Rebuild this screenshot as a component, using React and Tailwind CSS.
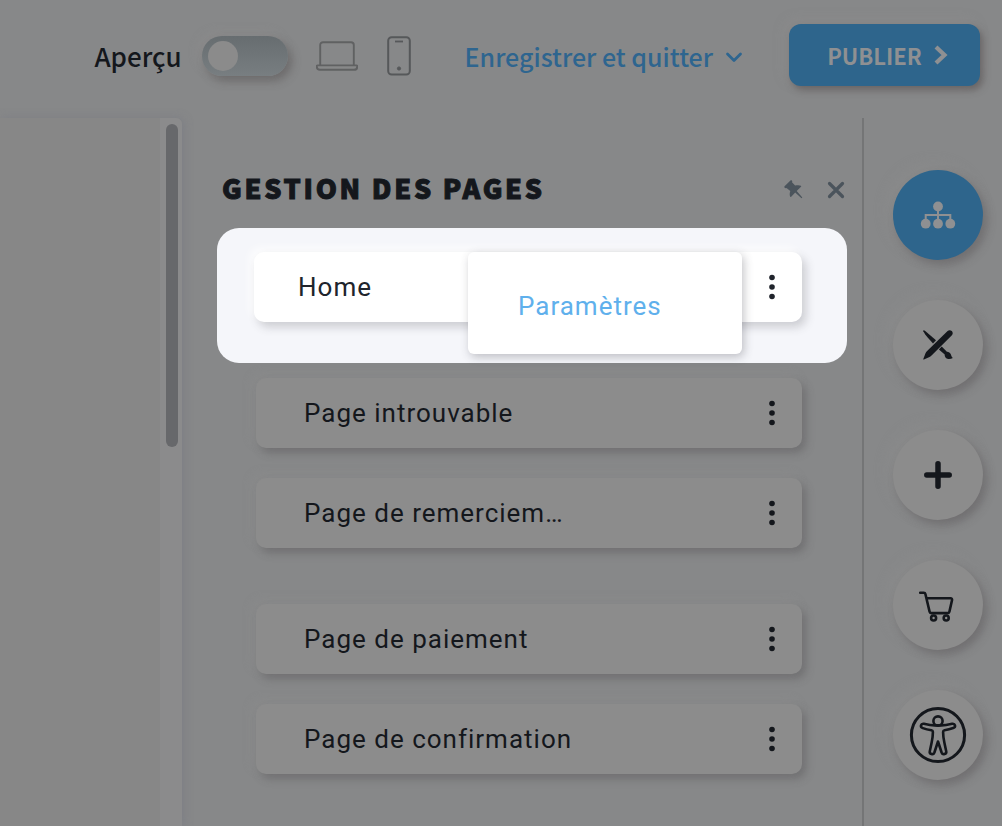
import React from "react";

const pages = [
  { name: "Page introuvable", gap: "mt-[15px]" },
  { name: "Page de remerciem…", gap: "mt-[30px]" },
  { name: "Page de paiement", gap: "mt-14" },
  { name: "Page de confirmation", gap: "mt-[30px]" },
];

function MoreButton({ label, tone }) {
  return (
    <button type="button" aria-label={label} className={"flex h-10 w-10 items-center justify-center " + tone}>
      <svg width="8" height="26" viewBox="0 0 8 26" fill="currentColor" aria-hidden="true">
        <circle cx="4" cy="3.5" r="2.8" />
        <circle cx="4" cy="13" r="2.8" />
        <circle cx="4" cy="22.5" r="2.8" />
      </svg>
    </button>
  );
}

function LaptopIcon() {
  return (
    <svg width="42" height="30" viewBox="0 0 42 30" fill="none" stroke="currentColor" strokeWidth="1.9" aria-hidden="true">
      <path d="M4.2 24V4c0-1.700 1.200-2.800 2.800-2.800h28c1.700 0 2.800 1.200 2.800 2.800v20" />
      <path d="M1.800 24.400h38.600c.5 0 .8.3.8.8v.600c0 1.900-1.300 3-3.200 3H4c-2 0-3.200-1.200-3.200-3v-.600c0-.5.4-.8 1-.8z" />
    </svg>
  );
}

function PhoneIcon() {
  return (
    <svg width="24" height="40" viewBox="0 0 24 40" fill="none" stroke="currentColor" strokeWidth="2" aria-hidden="true">
      <rect x="1.200" y="1.200" width="21.600" height="37.400" rx="3.500" />
      <path d="M8 5.500h8" strokeWidth="1.800" />
      <circle cx="12" cy="32.500" r="1.600" fill="currentColor" strokeWidth="1" />
    </svg>
  );
}

function SitemapIcon() {
  return (
    <svg width="36" height="30" viewBox="0 0 36 30" aria-hidden="true">
      <path d="M18 6v18M5.700 24V15h24.600v9" fill="none" stroke="currentColor" strokeWidth="2" />
      <g fill="currentColor">
        <circle cx="18" cy="6.500" r="4.900" />
        <circle cx="5.700" cy="23.700" r="4.900" />
        <circle cx="18" cy="23.700" r="4.900" />
        <circle cx="30.300" cy="23.700" r="4.900" />
      </g>
    </svg>
  );
}

function DesignIcon() {
  return (
    <svg width="30" height="30" viewBox="0 0 30 30" fill="currentColor" aria-hidden="true">
      <path d="M.3.400C.8.200 1.500.400 2.200.900l10.800 9.300-3 3.200C6.600 9.900 2.400 5.400.3 1.300z" />
      <path d="M18.700 16.500l5.200 5.300c1.600-.1 3.200.9 3.900 2.400.5 1.300.8 2.600 2.100 3.900-2.600 1.400-5.500 1.200-6.900-.1-1-.9-1.400-2.100-1.300-3.400l-5.800-5.100z" />
      <path d="M24.600 1c1.200-1.100 3-1 4.200.1s1.200 2.900.1 4.100L8.800 25.300c-.7.7-1.400 1.200-2.300 1.600L.9 29.500c-.4.200-.8-.1-.6-.6l2.200-5.600c.4-.9.900-1.600 1.600-2.300z" />
    </svg>
  );
}

function PlusIcon() {
  return (
    <svg width="28" height="28" viewBox="0 0 28 28" fill="none" stroke="currentColor" strokeWidth="5.500" strokeLinecap="round" aria-hidden="true">
      <path d="M14 2.800v22.400M2.800 14h22.400" />
    </svg>
  );
}

function CartIcon() {
  return (
    <svg width="40" height="36" viewBox="0 0 40 36" fill="none" stroke="currentColor" strokeWidth="2.600" strokeLinecap="round" strokeLinejoin="round" aria-hidden="true">
      <path d="M2.200 5.800h3.600c.9 0 1.400.4 1.600 1.200l4.200 17.700c.2.900.8 1.400 1.700 1.400h16.400c.9 0 1.500-.5 1.700-1.400l2.600-11.500c.3-1.200-.3-1.900-1.500-1.900H8.600" />
      <circle cx="15.600" cy="31" r="2.500" />
      <circle cx="28.200" cy="31" r="2.500" />
    </svg>
  );
}

function AccessibilityIcon() {
  return (
    <svg width="58" height="58" viewBox="0 0 58 58" fill="none" stroke="currentColor" strokeLinejoin="round" aria-hidden="true">
      <circle cx="29" cy="29" r="26.600" strokeWidth="3" />
      <circle cx="29" cy="15" r="4.600" strokeWidth="2.600" />
      <path strokeWidth="2.600" d="M25.700 19.400h6.600c3.700-.1 7.600-.9 10.800-1.600 3.200-.5 4.100 3.300 1.100 4.300-2.800 1-6 1.700-8.700 2.100-1.200.2-1.400.7-1.400 1.800 0 4 .5 7.300 1.300 10.800l1.800 8.400c.7 3-3.500 4.200-4.600 1.300L29 35.500l-3.600 11c-1.100 2.900-5.300 1.700-4.600-1.300l1.800-8.400c.8-3.500 1.300-6.800 1.300-10.800 0-1.100-.2-1.600-1.400-1.800-2.700-.4-5.900-1.100-8.700-2.100-3-1-2.100-4.800 1.100-4.300 3.200.7 7.100 1.500 10.800 1.600z" />
    </svg>
  );
}

const tools = [
  { label: "Pages", icon: SitemapIcon, active: true },
  { label: "Design", icon: DesignIcon },
  { label: "Ajouter", icon: PlusIcon },
  { label: "Boutique", icon: CartIcon },
  { label: "Accessibilité", icon: AccessibilityIcon },
];

export default function App() {
  return (
    <div className="flex min-h-screen flex-col bg-[#878889] font-['Roboto',sans-serif] text-[#14171c]">
      <header className="flex h-[118px] items-start justify-end pr-[22px] pt-6 font-['Noto_Sans_CJK_JP',sans-serif] whitespace-nowrap">
        <div className="flex h-16 items-center">
          <label htmlFor="preview" className="text-[26px] leading-8 font-medium">Aperçu</label>
          <span className="relative ml-5 block h-10 w-[86px]">
            <input
              id="preview"
              type="checkbox"
              role="switch"
              className="block h-10 w-[86px] appearance-none rounded-full bg-linear-to-b from-[#676d70] to-[#787e81] shadow-[4px_5px_10px_rgba(70,65,65,0.4),-4px_-4px_10px_rgba(145,143,143,0.4)]"
            />
            <span className="pointer-events-none absolute left-1.5 top-[5px] size-[30px] rounded-full bg-[#8b8b8b]" />
          </span>
          <button type="button" aria-label="Ordinateur" className="ml-7 text-[#606162]"><LaptopIcon /></button>
          <button type="button" aria-label="Mobile" className="ml-[29px] text-[#56585a]"><PhoneIcon /></button>
          <button type="button" className="ml-[54px] flex items-center gap-3 text-[25px] leading-8 font-medium text-[#2e658f]">
            Enregistrer et quitter
            <svg width="18" height="14" viewBox="0 0 18 14" fill="none" stroke="currentColor" strokeWidth="2.800" strokeLinecap="round" strokeLinejoin="round" aria-hidden="true">
              <path d="M2.500 5L9 11.500 15.500 5" />
            </svg>
          </button>
        </div>
        <button type="button" className="ml-[46px] flex h-[62px] w-[191px] items-center justify-center gap-3 rounded-xl bg-[#2e658c] pl-1.5 text-[22px] leading-8 font-bold text-[#8f9092] shadow-[3px_4px_7px_rgba(75,68,68,0.5),-4px_-4px_12px_rgba(145,143,143,0.35)]">
          PUBLIER
          <svg width="14" height="20" viewBox="0 0 14 20" fill="none" stroke="currentColor" strokeWidth="4.200" aria-hidden="true">
            <path d="M2 2l8.500 8L2 18" />
          </svg>
        </button>
      </header>

      <div className="flex grow">
        <div className="flex min-w-0 grow justify-end rounded-tr-md bg-[#878787] shadow-[2px_0_8px_rgba(115,118,130,0.5)]">
          <div className="w-[22px] rounded-tr-md bg-[#8b8b8c] px-1.5 pt-1.5">
            <div className="-mr-0.5 h-[323px] w-3 rounded-full bg-[#67686b]" />
          </div>
        </div>

        <aside className="flex w-[680px] shrink-0 flex-col pl-[35px] pr-[15px]">
          <div className="flex h-[110px] items-center justify-between pl-[5px] pt-[30px]">
            <h1 className="font-['Noto_Sans_CJK_JP',sans-serif] text-[27px] leading-9 font-black tracking-widest [-webkit-text-stroke:1px_#14171c]">GESTION DES PAGES</h1>
            <div className="flex items-center gap-6 pt-1 text-[#4b545c]">
              <button type="button" aria-label="Épingler">
                <svg width="20" height="20" viewBox="0 0 20 20" fill="currentColor" aria-hidden="true">
                  <path d="M7.200.700c.6-.600 1.200-.600 1.700-.1.500.600.500 1.200.1 1.700l3.100 3.300c2-.6 4.200-.7 5.800.1.500.3.500.7.1 1.100l-4.300 4.300 5.600 6.300-.8.800-6.300-5.600-4 4.200c-.5.400-.9.300-1.100-.2-.6-1.700-.5-3.700.2-5.700L3.500 7.900c-.5.400-1.200.4-1.800-.1s-.5-1.200.1-1.700z" />
                </svg>
              </button>
              <button type="button" aria-label="Fermer" className="mr-0.5">
                <svg width="18" height="18" viewBox="0 0 18 18" fill="none" stroke="currentColor" strokeWidth="3.200" strokeLinecap="round" aria-hidden="true">
                  <path d="M2.500 2.500l13 13M15.500 2.500l-13 13" />
                </svg>
              </button>
            </div>
          </div>

          <div className="rounded-[22px] bg-[#f5f6fa] pb-[41px] pl-[37px] pr-[45px] pt-6">
            <div className="relative flex h-[70px] items-center justify-between rounded-[10px] bg-white pl-11 pr-2.5 text-[26px] leading-8 tracking-[1px] text-[#20242c] shadow-[4px_5px_10px_rgba(60,60,70,0.22),-4px_-4px_10px_rgba(255,255,255,0.8)]">
              <span>Home</span>
              <MoreButton label="Options de Home" tone="text-[#20242c]" />
              <div className="absolute right-[60px] top-0 flex h-[102px] w-[274px] items-center rounded-md bg-white pl-[50px] pt-1.5 shadow-[2px_3px_10px_rgba(60,60,70,0.3)]">
                <button type="button" className="tracking-[1px] text-[#5fb0ec]">Paramètres</button>
              </div>
            </div>
          </div>

          <ul className="pl-[39px] pr-[45px] pb-[52px]">
            {pages.map((page) => (
              <li key={page.name} className={"flex h-[70px] items-center justify-between rounded-[10px] bg-[#8c8c8c] pl-12 pr-2.5 text-[26px] leading-8 tracking-[1px] shadow-[4px_5px_9px_rgba(75,72,74,0.35),-4px_-4px_10px_rgba(142,142,143,0.4)] " + page.gap}>
                <span>{page.name}</span>
                <MoreButton label={"Options de " + page.name} tone="text-[#14171c]" />
              </li>
            ))}
          </ul>
        </aside>

        <nav aria-label="Outils" className="flex shrink-0 flex-col gap-10 border-l-2 border-[#747576] pb-11 pl-[29px] pr-[19px] pt-[52px]">
          {tools.map(({ label, icon: Icon, active }) => (
            <button
              key={label}
              type="button"
              aria-label={label}
              className={"flex size-[90px] items-center justify-center rounded-full shadow-[4px_5px_10px_rgba(75,72,74,0.38),-5px_-5px_14px_rgba(143,142,143,0.45)] " + (active ? "bg-[#2e658c] text-[#8f9092]" : "bg-[#8c8c8c]")}
            >
              <Icon />
            </button>
          ))}
        </nav>
      </div>
    </div>
  );
}
